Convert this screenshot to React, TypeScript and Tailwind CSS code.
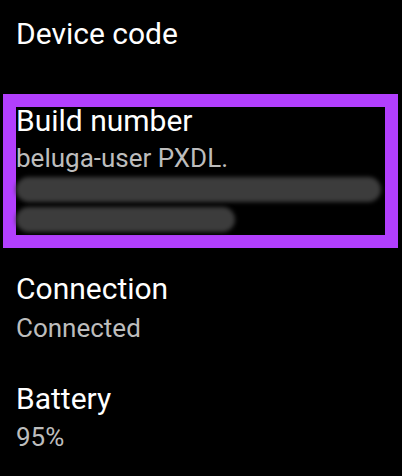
import React from "react";

function Row({ title, sub, className = "", subMt = "mt-[10px]" }: { title: string; sub: string; className?: string; subMt?: string }) {
  return (
    <div className={className}>
      <div className="text-[30px] leading-[28px] text-white">{title}</div>
      <div className={`${subMt} text-[26px] leading-[30px] text-[#bdbdbd]`}>{sub}</div>
    </div>
  );
}

export default function App() {
  return (
    <div className="w-[402px] h-[476px] overflow-hidden bg-black px-4 pt-[20px] font-['Roboto',sans-serif]">
      <div className="text-[30px] leading-[28px] text-white">Device code</div>

      <div className="mt-[46px] ml-[-13px] mr-[-12px] border-[13px] border-[#b23ffd] pb-[3px]">
        <div className="text-[30px] leading-[28px] text-white">Build number</div>
        <div className="mt-[8px] text-[26px] leading-[30px] text-[#bdbdbd]">beluga-user PXDL.</div>
        <div className="mt-[4px] flex h-[25px] w-[365px]">
          <div className="h-full flex-1 rounded-full bg-[#3c3c3c] blur-[2px]" />
        </div>
        <div className="mt-[5px] flex h-[25px] w-[219px]">
          <div className="h-full flex-1 rounded-full bg-[#3c3c3c] blur-[2px]" />
        </div>
      </div>

      <Row className="mt-[27px]" title="Connection" sub="Connected" />
      <Row className="mt-[42px]" subMt="mt-[9px]" title="Battery" sub="95%" />
    </div>
  );
}
